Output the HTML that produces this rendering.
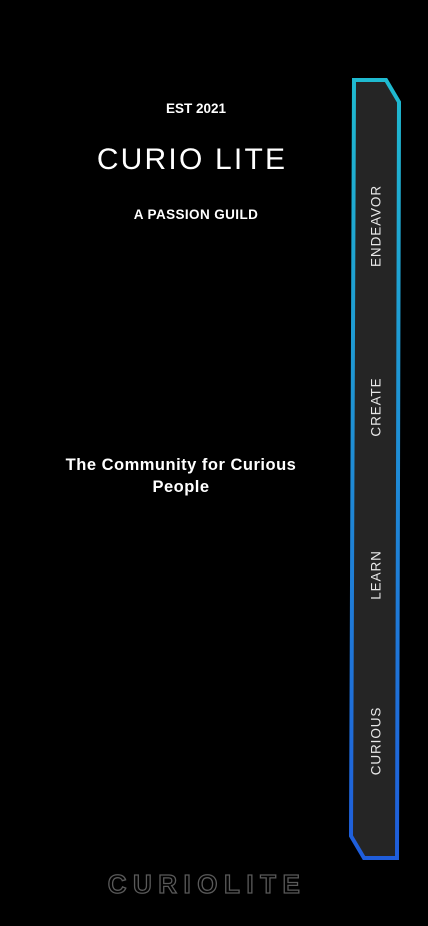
<!DOCTYPE html>
<html><head><meta charset="utf-8"><style>
html,body{margin:0;padding:0;background:#000;width:428px;height:926px;overflow:hidden;position:relative;font-family:"Liberation Sans",sans-serif;color:#fff}
.c{position:absolute;white-space:nowrap;transform:translateX(-50%)}
.v{position:absolute;left:376px;transform:translate(-50%,-50%) rotate(-90deg);font-size:13.5px;letter-spacing:0.9px;color:#e8e8e8;white-space:nowrap}
</style></head><body>
<div class="c" style="left:196px;top:101px;font-size:13.5px;font-weight:bold">EST 2021</div>
<div class="c" style="left:192px;top:143px;font-size:30px;letter-spacing:2.2px">CURIO LITE</div>
<div class="c" style="left:196px;top:207px;font-size:13.5px;font-weight:bold;letter-spacing:0.4px">A PASSION GUILD</div>
<div class="c" style="left:181px;top:454px;font-size:16.5px;font-weight:bold;text-align:center;line-height:22px;letter-spacing:0.5px">The Community for Curious<br>People</div>
<svg style="position:absolute;left:0;top:0" width="428" height="926">
<defs><linearGradient id="g" x1="0" y1="0" x2="0" y2="1"><stop offset="0" stop-color="#1fbad0"/><stop offset="1" stop-color="#1f5ddb"/></linearGradient></defs>
<polygon points="354,80 386,80 399,102 397,858 364,858 351,836" fill="#252525" stroke="url(#g)" stroke-width="4"/>
</svg>
<div class="v" style="top:226px">ENDEAVOR</div>
<div class="v" style="top:407px">CREATE</div>
<div class="v" style="top:575px">LEARN</div>
<div class="v" style="top:741px">CURIOUS</div>
<div class="c" style="left:207px;top:869px;font-size:26px;font-weight:bold;letter-spacing:6.5px;color:transparent;-webkit-text-stroke:1.3px #5a5a5a">CURIOLITE</div>
</body></html>
